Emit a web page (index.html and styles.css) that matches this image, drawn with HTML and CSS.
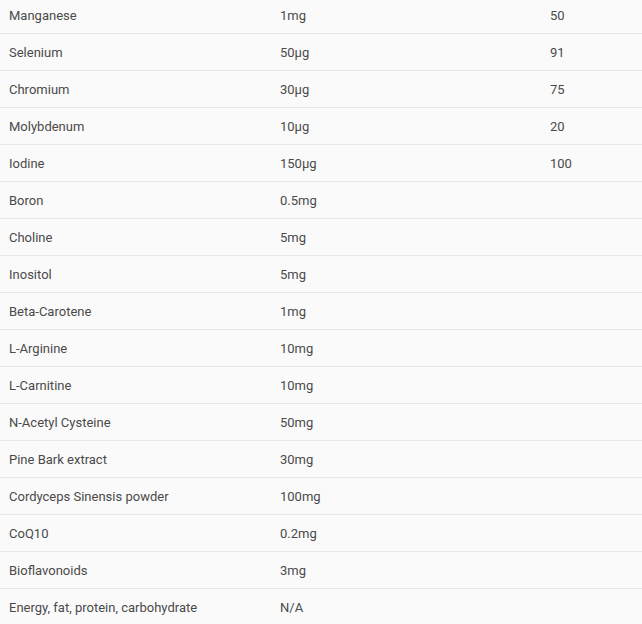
FILE: index.html
```html
<!DOCTYPE html>
<html>
<head>
<meta charset="utf-8">
<link rel="stylesheet" href="styles.css">
</head>
<body>
<div class="wrap">
<table class="nutri">
<tbody>
<tr><td>Manganese</td><td>1mg</td><td>50</td></tr>
<tr><td>Selenium</td><td>50µg</td><td>91</td></tr>
<tr><td>Chromium</td><td>30µg</td><td>75</td></tr>
<tr><td>Molybdenum</td><td>10µg</td><td>20</td></tr>
<tr><td>Iodine</td><td>150µg</td><td>100</td></tr>
<tr><td>Boron</td><td>0.5mg</td><td></td></tr>
<tr><td>Choline</td><td>5mg</td><td></td></tr>
<tr><td>Inositol</td><td>5mg</td><td></td></tr>
<tr><td>Beta-Carotene</td><td>1mg</td><td></td></tr>
<tr><td>L-Arginine</td><td>10mg</td><td></td></tr>
<tr><td>L-Carnitine</td><td>10mg</td><td></td></tr>
<tr><td>N-Acetyl Cysteine</td><td>50mg</td><td></td></tr>
<tr><td>Pine Bark extract</td><td>30mg</td><td></td></tr>
<tr><td>Cordyceps Sinensis powder</td><td>100mg</td><td></td></tr>
<tr><td>CoQ10</td><td>0.2mg</td><td></td></tr>
<tr><td>Bioflavonoids</td><td>3mg</td><td></td></tr>
<tr><td>Energy, fat, protein, carbohydrate</td><td>N/A</td><td></td></tr>
</tbody>
</table>
</div>
</body>
</html>
```
FILE: styles.css
```css
html, body {
  margin: 0;
  padding: 0;
  background: #fafafa;
}
.wrap {
  width: 642px;
  height: 624px;
  overflow: hidden;
}
.nutri {
  width: 642px;
  margin-top: -3px;
  border-collapse: collapse;
  table-layout: fixed;
  font-family: Roboto, "Noto Sans", sans-serif;
  font-size: 13px;
  font-weight: 400;
  color: #4a4a4a;
}
.nutri td {
  height: 36px;
  padding: 0 9px;
  border-bottom: 1px solid #e8e8e8;
  vertical-align: middle;
  white-space: nowrap;
}
.nutri td:nth-child(1) { width: 253px; }
.nutri td:nth-child(2) { width: 252px; }
```
